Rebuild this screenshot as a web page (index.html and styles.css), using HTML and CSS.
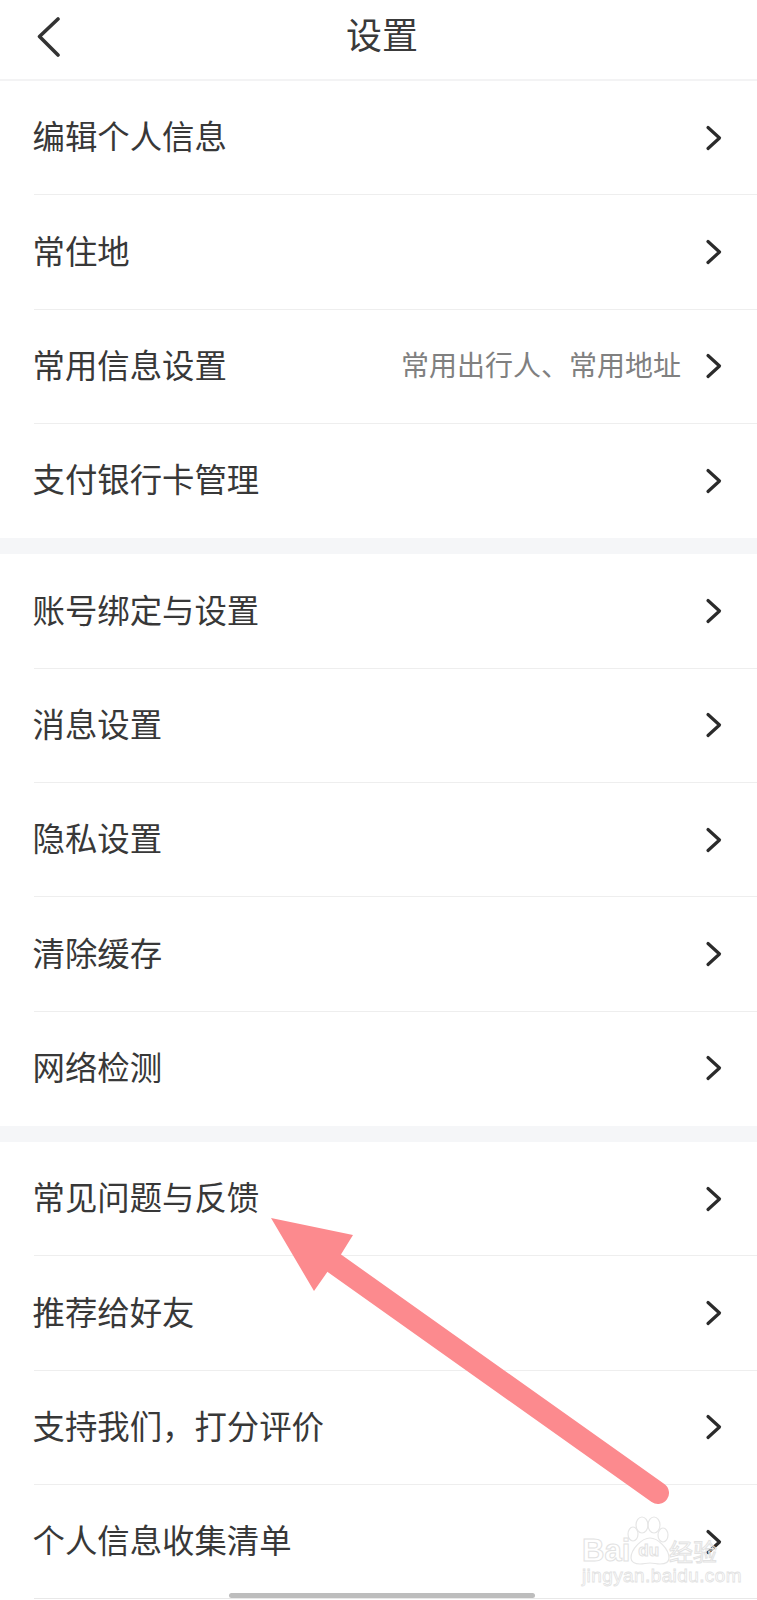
FILE: index.html
```html
<!DOCTYPE html>
<html lang="zh-CN">
<head>
<meta charset="utf-8">
<title>设置</title>
<link rel="stylesheet" href="styles.css">
</head>
<body>
<div class="screen">
  <header class="topbar">
    <svg class="back" viewBox="0 0 24 40" aria-hidden="true"><path d="M21 2 2.500 19.500 21 38"/></svg>
    <h1 class="title">设置</h1>
  </header>

  <section class="group">
    <div class="row"><span class="label">编辑个人信息</span><svg class="chev" viewBox="0 0 18 26"><path d="m3 2.500 11.500 10.500-11.500 10.500"/></svg></div>
    <div class="row"><span class="label">常住地</span><svg class="chev" viewBox="0 0 18 26"><path d="m3 2.500 11.500 10.500-11.500 10.500"/></svg></div>
    <div class="row"><span class="label">常用信息设置</span><span class="hint">常用出行人、常用地址</span><svg class="chev" viewBox="0 0 18 26"><path d="m3 2.500 11.500 10.500-11.500 10.500"/></svg></div>
    <div class="row"><span class="label">支付银行卡管理</span><svg class="chev" viewBox="0 0 18 26"><path d="m3 2.500 11.500 10.500-11.500 10.500"/></svg></div>
  </section>

  <section class="group">
    <div class="row"><span class="label">账号绑定与设置</span><svg class="chev" viewBox="0 0 18 26"><path d="m3 2.500 11.500 10.500-11.500 10.500"/></svg></div>
    <div class="row"><span class="label">消息设置</span><svg class="chev" viewBox="0 0 18 26"><path d="m3 2.500 11.500 10.500-11.500 10.500"/></svg></div>
    <div class="row"><span class="label">隐私设置</span><svg class="chev" viewBox="0 0 18 26"><path d="m3 2.500 11.500 10.500-11.500 10.500"/></svg></div>
    <div class="row"><span class="label">清除缓存</span><svg class="chev" viewBox="0 0 18 26"><path d="m3 2.500 11.500 10.500-11.500 10.500"/></svg></div>
    <div class="row"><span class="label">网络检测</span><svg class="chev" viewBox="0 0 18 26"><path d="m3 2.500 11.500 10.500-11.500 10.500"/></svg></div>
  </section>

  <section class="group">
    <div class="row"><span class="label">常见问题与反馈</span><svg class="chev" viewBox="0 0 18 26"><path d="m3 2.500 11.500 10.500-11.500 10.500"/></svg></div>
    <div class="row"><span class="label">推荐给好友</span><svg class="chev" viewBox="0 0 18 26"><path d="m3 2.500 11.500 10.500-11.500 10.500"/></svg></div>
    <div class="row"><span class="label">支持我们，打分评价</span><svg class="chev" viewBox="0 0 18 26"><path d="m3 2.500 11.500 10.500-11.500 10.500"/></svg></div>
    <div class="row"><span class="label">个人信息收集清单</span><svg class="chev" viewBox="0 0 18 26"><path d="m3 2.500 11.500 10.500-11.500 10.500"/></svg></div>
  </section>

  <div class="homebar"></div>

  <!-- annotation arrow pointing at the feedback row -->
  <svg class="arrow" viewBox="0 0 757 1600" aria-hidden="true">
    <path class="arrow-shaft" d="M658 1493 334 1263"/>
    <path class="arrow-head" d="M271 1218 353 1235 340 1256 328 1271 314 1291Z"/>
  </svg>

  <!-- site watermark -->
  <div class="mark">
    <svg class="paw" viewBox="0 0 50 50" aria-hidden="true">
      <ellipse cx="8" cy="19" rx="5" ry="7"/>
      <ellipse cx="17" cy="10" rx="6" ry="8"/>
      <ellipse cx="29" cy="10" rx="6" ry="8"/>
      <ellipse cx="38" cy="20" rx="5" ry="7"/>
      <path d="M25 23c8 0 19 11 19 20 0 4-4 6-9 6-4 0-6-1-10-1s-6 1-10 1c-5 0-9-2-9-6 0-9 11-20 19-20Z"/>
    </svg>
    <div class="mark-line"><span class="mark-bai">Bai</span><span class="mark-du">du</span><span class="mark-cn">经验</span></div>
    <div class="mark-url">jingyan.baidu.com</div>
  </div>
</div>
</body>
</html>
```
FILE: styles.css
```css
* { box-sizing: border-box; }

html, body { margin: 0; padding: 0; background: #fff; }

body {
  font-family: "Noto Sans CJK SC", "Noto Sans", sans-serif;
  color: #333;
}

.screen {
  position: relative;
  width: 757px;
  height: 1600px;
  overflow: hidden;
  background: #fff;
}

.topbar {
  position: relative;
  height: 81px;
  display: flex;
  align-items: center;
  justify-content: center;
  border-bottom: 2px solid #f3f3f4;
}

.back {
  position: absolute;
  left: 37px;
  top: 17px;
  width: 24px;
  height: 40px;
  fill: none;
  stroke: #333;
  stroke-width: 3.6;
  stroke-linecap: round;
  stroke-linejoin: round;
}

.title {
  margin: 0 0 12px;
  padding-left: 7px;
  font-size: 36px;
  font-weight: 400;
  line-height: 1.2;
  color: #3a3a3a;
}

.group + .group { border-top: 16.6px solid #f5f6f8; }

.row {
  height: 114.35px;
  margin-left: 34px;
  padding-right: 34px;
  display: flex;
  align-items: center;
  border-bottom: 1px solid #eeeeee;
}

.group > .row:last-child { border-bottom-color: transparent; }
.group:last-of-type > .row:last-child { border-bottom-color: #e8e8e8; }

.label {
  flex: 1;
  margin-left: -1.500px;
  padding-bottom: 4px;
  font-size: 32.4px;
  line-height: 1.2;
  color: #383838;
}

.hint {
  margin-right: 24px;
  padding-bottom: 4px;
  font-size: 28px;
  line-height: 1.2;
  color: #808080;
}

.chev {
  width: 18px;
  height: 26px;
  fill: none;
  stroke: #2b2b2b;
  stroke-width: 3.2;
  stroke-linecap: round;
  stroke-linejoin: round;
}

.homebar {
  position: absolute;
  left: 229px;
  bottom: 2px;
  width: 306px;
  height: 5px;
  border-radius: 3px;
  background: #bdbdbd;
}

.arrow {
  position: absolute;
  inset: 0;
  width: 757px;
  height: 1600px;
}

.arrow-shaft {
  fill: none;
  stroke: #fc8a8e;
  stroke-width: 22;
  stroke-linecap: round;
}

.arrow-head { fill: #fc8a8e; }

.mark {
  position: absolute;
  left: 582px;
  top: 1515px;
  width: 140px;
  height: 72px;
  color: transparent;
}

.paw {
  position: absolute;
  left: 43px;
  top: 0;
  width: 50px;
  height: 50px;
  fill: none;
  stroke: #e6e6e6;
  stroke-width: 1.2;
}

.mark-line {
  position: absolute;
  left: 0;
  top: 22px;
  display: flex;
  align-items: center;
  height: 28px;
  white-space: nowrap;
  font-family: "Liberation Sans", sans-serif;
  line-height: 28px;
  -webkit-text-stroke: 1px #e2e2e2;
}

.mark-bai { font-size: 31px; font-weight: 700; }
.mark-du { margin-left: 8px; font-size: 17px; font-weight: 700; }

.mark-cn {
  margin-left: 10px;
  font-family: "Noto Sans CJK SC", sans-serif;
  font-size: 24px;
}

.mark-url {
  position: absolute;
  left: 0;
  top: 51px;
  white-space: nowrap;
  font-family: "Liberation Sans", sans-serif;
  font-size: 19px;
  line-height: 1.1;
  letter-spacing: 0.4px;
  -webkit-text-stroke: 0.8px #e2e2e2;
}
```
